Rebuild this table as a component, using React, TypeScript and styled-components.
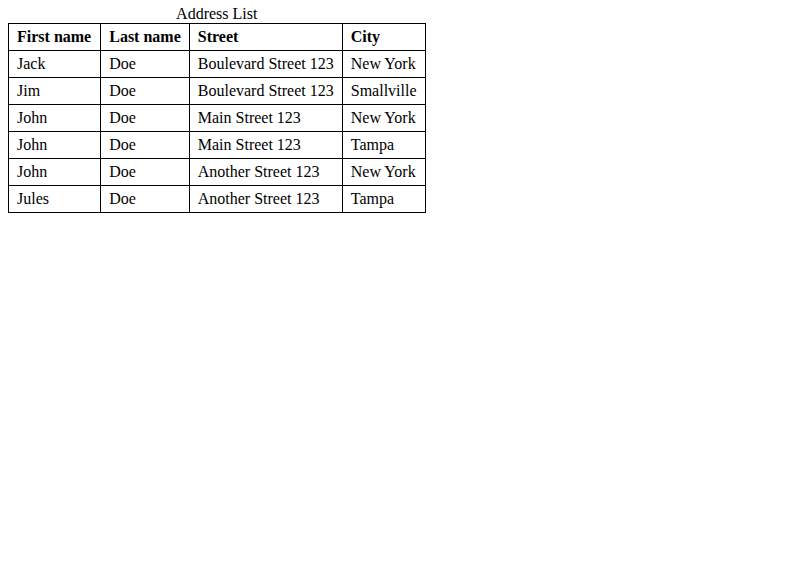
import React from "react";
import styled, { createGlobalStyle } from "styled-components";

const GlobalStyle = createGlobalStyle`
  body {
    margin: 8px;
    background: #fff;
    color: #000;
    font-family: "Liberation Serif", "Times New Roman", serif;
    font-size: 16px;
  }
`;

const Table = styled.table`
  border-collapse: collapse;
  font-family: "Liberation Serif", "Times New Roman", serif;
  font-size: 16px;
`;

const Caption = styled.caption`
  text-align: center;
  line-height: 12px;
  padding-bottom: 3px;
`;

const HeadCell = styled.th<{ $extra?: number }>`
  border: 1px solid #000;
  padding: 4px ${(p) => 8 + (p.$extra ?? 0)}px 4px 8px;
  text-align: left;
  font-weight: bold;
  line-height: 18px;
`;

const Cell = styled.td`
  border: 1px solid #000;
  padding: 4px 8px;
  text-align: left;
  line-height: 18px;
`;

const rows = [
  ["Jack", "Doe", "Boulevard Street 123", "New York"],
  ["Jim", "Doe", "Boulevard Street 123", "Smallville"],
  ["John", "Doe", "Main Street 123", "New York"],
  ["John", "Doe", "Main Street 123", "Tampa"],
  ["John", "Doe", "Another Street 123", "New York"],
  ["Jules", "Doe", "Another Street 123", "Tampa"],
];

export default function App() {
  return (
    <>
      <GlobalStyle />
      <Table>
        <Caption>Address List</Caption>
        <thead>
          <tr>
            <HeadCell $extra={1}>First name</HeadCell>
            <HeadCell>Last name</HeadCell>
            <HeadCell>Street</HeadCell>
            <HeadCell>City</HeadCell>
          </tr>
        </thead>
        <tbody>
          {rows.map((r, i) => (
            <tr key={i}>
              {r.map((c, j) => (
                <Cell key={j}>{c}</Cell>
              ))}
            </tr>
          ))}
        </tbody>
      </Table>
    </>
  );
}
